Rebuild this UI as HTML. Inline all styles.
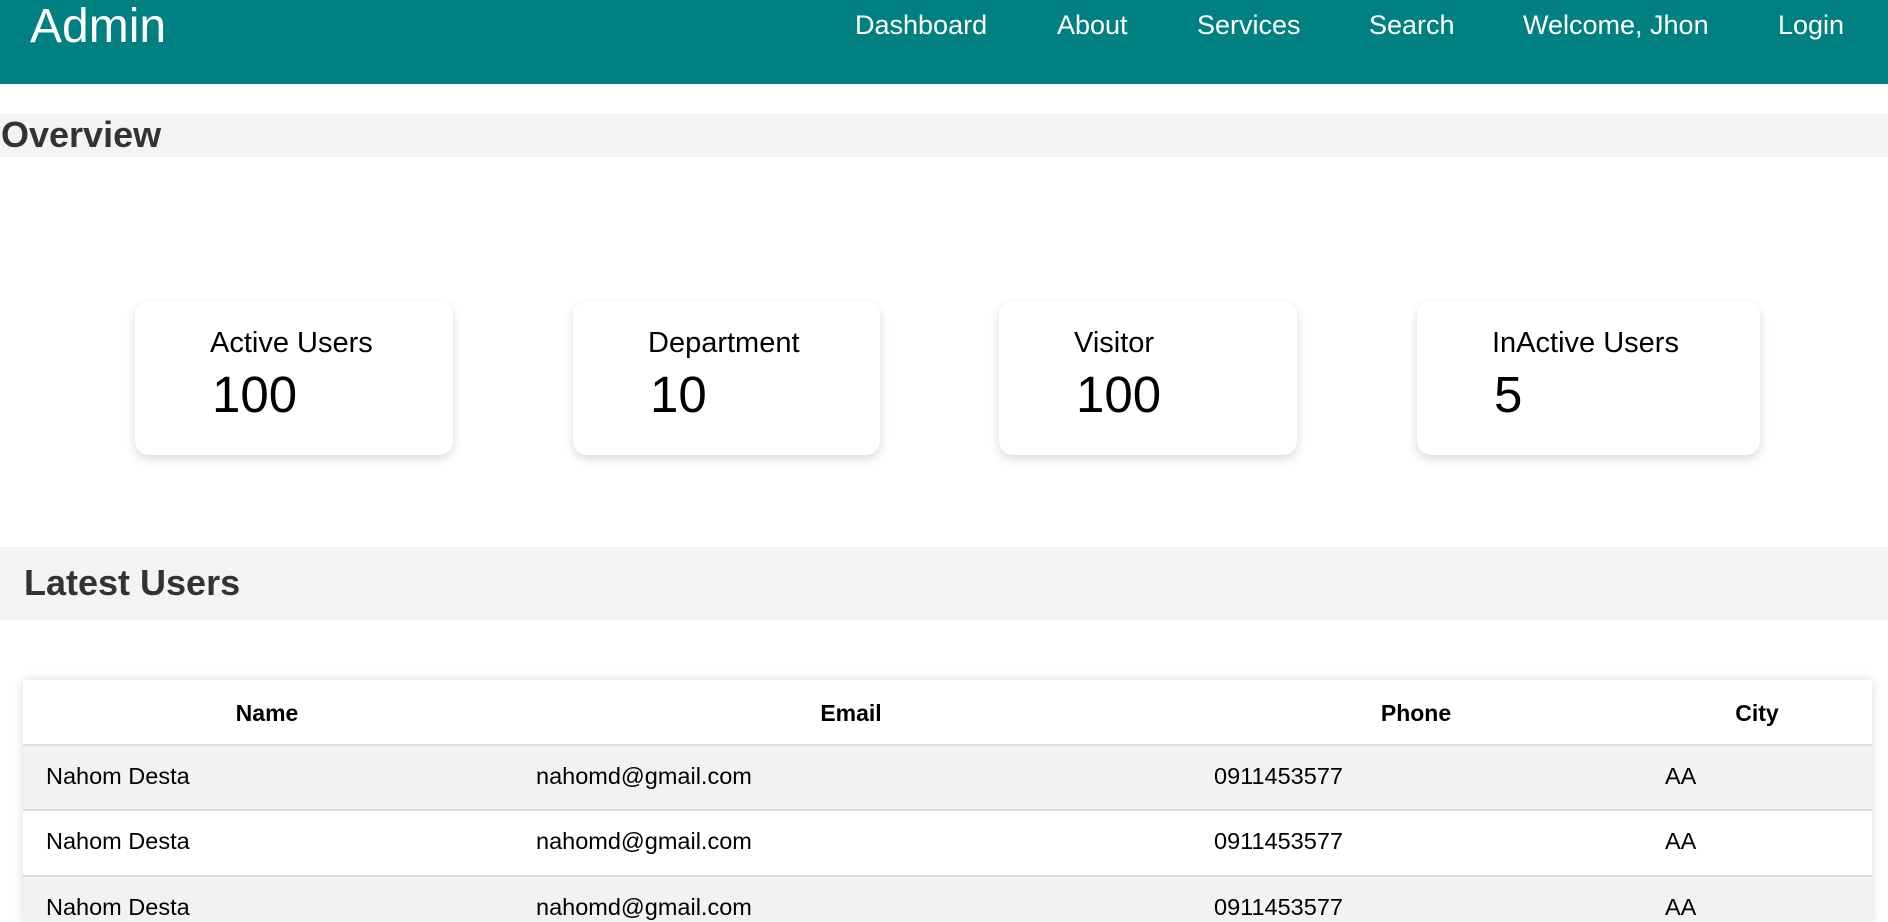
<!DOCTYPE html>
<html><head><meta charset="utf-8"><style>
*{margin:0;padding:0;box-sizing:border-box}
html,body{width:1888px;height:922px;overflow:hidden}
body{background:#fff;font-family:"Liberation Sans",Arial,sans-serif;position:relative;color:#000}
.hdr{position:absolute;left:0;top:0;width:1888px;height:84px;background:#008080}
.a{position:absolute;color:#fff;white-space:nowrap}
.band{position:absolute;left:0;width:1888px;background:#f4f4f4}
.card{position:absolute;top:301px;height:154px;background:#fff;border-radius:14px;box-shadow:0 4px 10px rgba(0,0,0,.15)}
.card .l{position:absolute;left:75px;top:26px;font-size:29px}
.card .n{position:absolute;left:77px;top:64px;font-size:51px}
.tbl{position:absolute;left:23px;top:680px;width:1849px;height:242px;background:#fff;box-shadow:0 0 10px rgba(0,0,0,.15);overflow:hidden}
.row{position:absolute;left:0;width:1849px;border-top:2px solid #ddd}
.t{position:absolute;font-size:23.5px;white-space:nowrap}
.h{font-weight:bold;transform:translateX(-50%);font-size:23px}
</style></head><body>
<div class="hdr">
<div class="a" style="left:30px;top:-1px;font-size:48px">Admin</div>
<div class="a" style="left:855px;top:10px;font-size:27px">Dashboard</div>
<div class="a" style="left:1057px;top:10px;font-size:27px">About</div>
<div class="a" style="left:1197px;top:10px;font-size:27px">Services</div>
<div class="a" style="left:1369px;top:10px;font-size:27px">Search</div>
<div class="a" style="left:1523px;top:10px;font-size:27px">Welcome, Jhon</div>
<div class="a" style="left:1778px;top:10px;font-size:27px">Login</div>
</div>
<div class="band" style="top:114px;height:43px"><div style="position:absolute;left:1px;top:0px;font-size:36px;font-weight:bold;color:#333">Overview</div></div>
<div class="card" style="left:135px;width:318px"><div class="l">Active Users</div><div class="n">100</div></div>
<div class="card" style="left:573px;width:307px"><div class="l">Department</div><div class="n">10</div></div>
<div class="card" style="left:999px;width:298px"><div class="l">Visitor</div><div class="n">100</div></div>
<div class="card" style="left:1417px;width:343px"><div class="l">InActive Users</div><div class="n">5</div></div>
<div class="band" style="top:547px;height:73px"><div style="position:absolute;left:24px;top:15px;font-size:36px;font-weight:bold;color:#333">Latest Users</div></div>
<div class="tbl">
<div class="t h" style="left:244px;top:20px">Name</div>
<div class="t h" style="left:828px;top:20px">Email</div>
<div class="t h" style="left:1393px;top:20px">Phone</div>
<div class="t h" style="left:1734px;top:20px">City</div>
<div class="row" style="top:64px;height:65px;background:#f2f2f2"><div class="t" style="left:23px;top:17px">Nahom Desta</div><div class="t" style="left:513px;top:17px">nahomd@gmail.com</div><div class="t" style="left:1191px;top:17px">0911453577</div><div class="t" style="left:1642px;top:17px">AA</div></div>
<div class="row" style="top:129px;height:66px;background:#fff"><div class="t" style="left:23px;top:17px">Nahom Desta</div><div class="t" style="left:513px;top:17px">nahomd@gmail.com</div><div class="t" style="left:1191px;top:17px">0911453577</div><div class="t" style="left:1642px;top:17px">AA</div></div>
<div class="row" style="top:195px;height:47px;background:#f2f2f2"><div class="t" style="left:23px;top:17px">Nahom Desta</div><div class="t" style="left:513px;top:17px">nahomd@gmail.com</div><div class="t" style="left:1191px;top:17px">0911453577</div><div class="t" style="left:1642px;top:17px">AA</div></div>
</div>
</body></html>
